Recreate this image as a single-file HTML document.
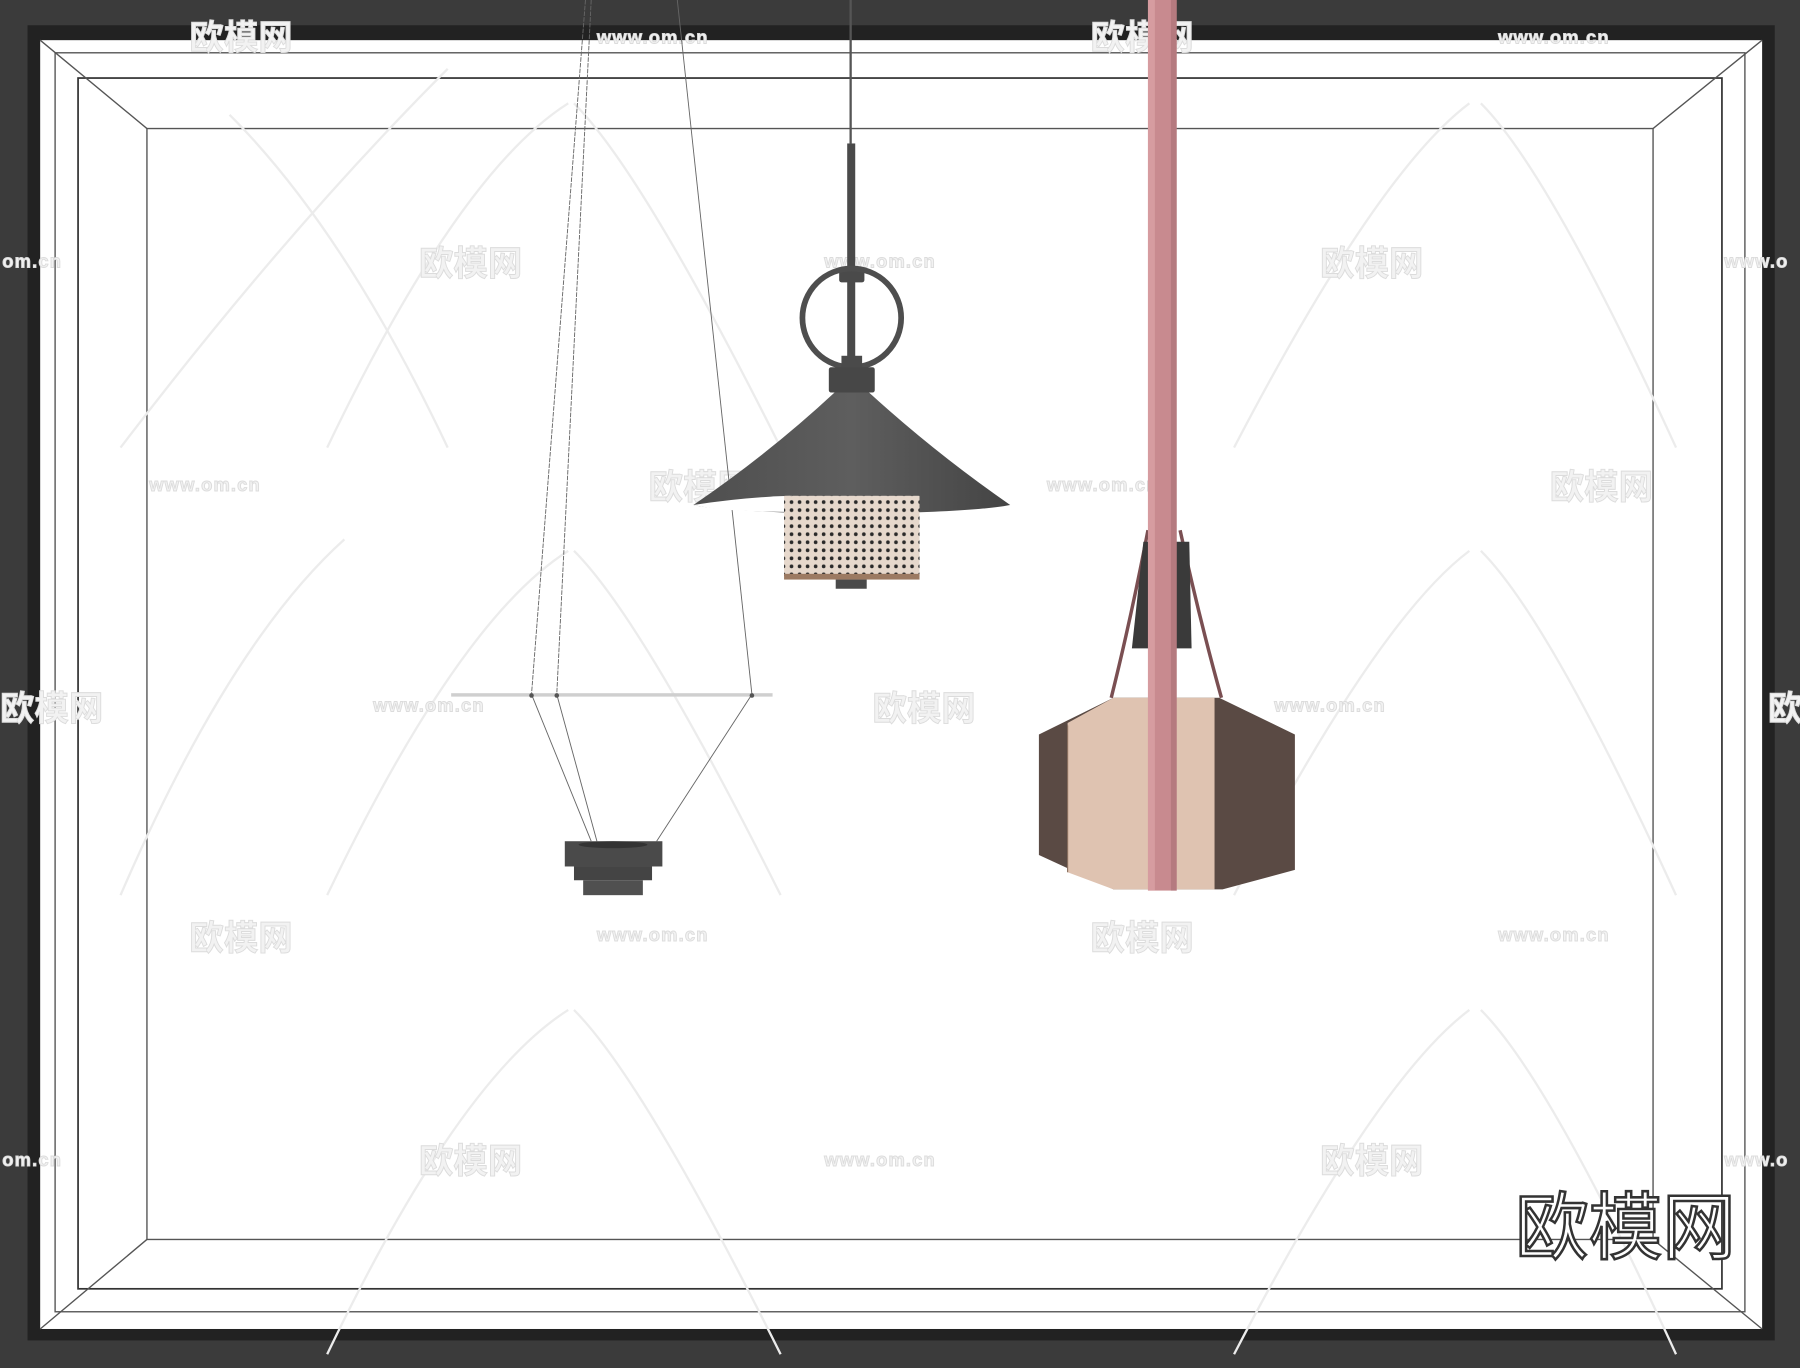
<!DOCTYPE html>
<html><head><meta charset="utf-8"><style>
html,body{margin:0;padding:0;background:#3a3a3a;}
svg{display:block}
</style></head><body>
<svg width="1800" height="1368" viewBox="0 0 1568 1192" preserveAspectRatio="none" xmlns="http://www.w3.org/2000/svg">
<defs>
<pattern id="cane" width="7" height="7" patternUnits="userSpaceOnUse">
<rect width="7" height="7" fill="#e6d8cc"/>
<circle cx="3.5" cy="3.5" r="1.6" fill="#2a2a2a"/>
</pattern>
<linearGradient id="shade" x1="0" x2="1">
<stop offset="0" stop-color="#4e4e4e"/><stop offset="0.5" stop-color="#5e5e5e"/><stop offset="1" stop-color="#444"/>
</linearGradient>
</defs>
<rect width="1568" height="1192" fill="#3b3b3b"/>
<rect x="24" y="22" width="1522" height="1146" fill="#222"/>
<rect x="35" y="35" width="1500" height="1123" fill="#fff"/>
<g fill="none" stroke="#555" stroke-width="1.2">
<rect x="48" y="46" width="1472" height="1097"/>
<rect x="68" y="68" width="1432" height="1055" stroke="#333" stroke-width="1.5"/>
<rect x="128" y="112" width="1312" height="968"/>
<line x1="35" y1="35" x2="128" y2="112"/>
<line x1="1535" y1="35" x2="1440" y2="112"/>
<line x1="35" y1="1158" x2="128" y2="1080"/>
<line x1="1535" y1="1158" x2="1440" y2="1080"/>
</g>
<!-- watermarks -->
<g fill="none" stroke="#ececec" stroke-width="2">
<path d="M105 390 Q250 200 390 60 M390 390 Q300 200 200 100"/>
<path d="M285 390 Q400 150 495 90 M680 390 Q560 150 500 90"/>
<path d="M1075 390 Q1200 150 1280 90 M1460 390 Q1350 150 1290 90"/>
<path d="M285 780 Q400 540 495 480 M680 780 Q560 540 500 480"/>
<path d="M1075 780 Q1200 540 1280 480 M1460 780 Q1350 540 1290 480"/>
<path d="M105 780 Q200 560 300 470 M680 1180 Q560 940 500 880 M285 1180 Q400 940 495 880"/>
<path d="M1075 1180 Q1200 940 1280 880 M1460 1180 Q1350 940 1290 880"/>
</g>
<g font-family="Liberation Sans, Noto Sans CJK SC, sans-serif" fill="#f2f2f2" stroke="#dcdcdc" stroke-width="0.8" font-weight="bold">
<g font-size="30">
<text x="165" y="43">欧模网</text><text x="950" y="43">欧模网</text>
<text x="365" y="240">欧模网</text><text x="1150" y="240">欧模网</text>
<text x="565" y="435">欧模网</text><text x="1350" y="435">欧模网</text>
<text x="0" y="628">欧模网</text><text x="760" y="628">欧模网</text><text x="1540" y="628">欧模网</text>
<text x="165" y="828">欧模网</text><text x="950" y="828">欧模网</text>
<text x="365" y="1022">欧模网</text><text x="1150" y="1022">欧模网</text>
</g>
<g font-size="16" letter-spacing="1">
<text x="520" y="38">www.om.cn</text><text x="1305" y="38">www.om.cn</text>
<text x="2" y="233">om.cn</text><text x="718" y="233">www.om.cn</text><text x="1502" y="233">www.o</text>
<text x="130" y="428">www.om.cn</text><text x="912" y="428">www.om.cn</text>
<text x="325" y="620">www.om.cn</text><text x="1110" y="620">www.om.cn</text>
<text x="520" y="820">www.om.cn</text><text x="1305" y="820">www.om.cn</text>
<text x="2" y="1016">om.cn</text><text x="718" y="1016">www.om.cn</text><text x="1502" y="1016">www.o</text>
</g>
</g>
<!-- left wire lamp -->
<g stroke="#666" stroke-width="0.8" fill="none">
<line x1="510" y1="0" x2="463" y2="605" stroke-dasharray="4 1"/>
<line x1="515" y1="0" x2="485" y2="605" stroke-dasharray="4 1"/>
<line x1="590" y1="0" x2="655" y2="605"/>
<line x1="463" y1="605" x2="515" y2="733"/>
<line x1="485" y1="605" x2="520" y2="733"/>
<line x1="655" y1="605" x2="572" y2="733"/>
</g>
<rect x="393" y="604" width="280" height="3" fill="#cfcfcf"/>
<circle cx="463" cy="606" r="2" fill="#555"/><circle cx="485" cy="606" r="2" fill="#555"/><circle cx="655" cy="606" r="2" fill="#555"/>
<g fill="#4a4a4a">
<rect x="492" y="733" width="85" height="22"/>
<rect x="500" y="755" width="68" height="12" fill="#444"/>
<rect x="508" y="767" width="52" height="13" fill="#505050"/>
</g>
<ellipse cx="534" cy="736" rx="30" ry="3" fill="#333"/>
<!-- center lamp -->
<rect x="740" y="0" width="2" height="125" fill="#555"/>
<rect x="738" y="125" width="7" height="200" fill="#4a4a4a"/>
<rect x="731" y="234" width="22" height="12" rx="2" fill="#4a4a4a"/>
<circle cx="742" cy="277" r="43" fill="none" stroke="#4e4e4e" stroke-width="5"/>
<rect x="733" y="310" width="18" height="12" fill="#4a4a4a"/>
<rect x="722" y="320" width="40" height="22" rx="2" fill="#474747"/>
<path d="M727 342 L757 342 Q815 395 880 440 Q850 446 742 448 Q630 446 604 440 Q670 395 727 342Z" fill="url(#shade)"/>
<path d="M604 440 Q650 433 690 432 L690 446 Q630 446 604 440Z" fill="#fff"/>
<rect x="683" y="432" width="118" height="70" fill="url(#cane)"/>
<rect x="683" y="500" width="118" height="5" fill="#9c7a62"/>
<rect x="728" y="505" width="27" height="8" fill="#4a4a4a"/>
<!-- right lamp -->
<path d="M1000 462 Q985 540 968 608" stroke="#7a4f52" stroke-width="3" fill="none"/>
<path d="M1028 462 Q1045 540 1064 608" stroke="#7a4f52" stroke-width="3" fill="none"/>
<path d="M996 472 L1036 472 L1038 565 L986 565Z" fill="#3a3a3a"/>
<path d="M905 640 L970 608 L1062 608 L1128 640 L1128 758 L1065 775 L970 775 L905 745Z" fill="#5a4a44"/>
<path d="M930 630 L970 608 L1058 608 L1058 775 L970 775 L930 760Z" fill="#dfc3b1"/>
<line x1="930" y1="632" x2="930" y2="760" stroke="#8a7060" stroke-width="1"/>
<rect x="1000" y="0" width="25" height="776" fill="#c88a8f"/>
<rect x="1000" y="0" width="6" height="776" fill="#d69ca0"/>
<rect x="1020" y="0" width="5" height="776" fill="#b57a7f"/>
<!-- logo -->
<text x="1320" y="1092" font-family="Liberation Sans, Noto Sans CJK SC, sans-serif" font-size="64" fill="#fff" stroke="#333" stroke-width="2.2">欧模网</text>
</svg>
</body></html>
